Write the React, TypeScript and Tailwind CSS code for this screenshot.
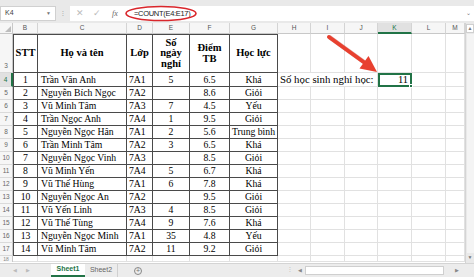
import React from "react"

const rows = [
  ["1", "Trần Văn Anh", "7A1", "5", "6.5", "Khá"],
  ["2", "Nguyễn Bích Ngọc", "7A2", "", "8.6", "Giỏi"],
  ["3", "Vũ Minh Tâm", "7A3", "7", "4.5", "Yếu"],
  ["4", "Trần Ngọc Anh", "7A4", "1", "9.5", "Giỏi"],
  ["5", "Nguyễn Ngọc Hân", "7A1", "2", "5.6", "Trung bình"],
  ["6", "Trần Minh Tâm", "7A2", "3", "6.5", "Khá"],
  ["7", "Nguyễn Ngọc Vinh", "7A3", "", "8.5", "Giỏi"],
  ["8", "Vũ Minh Yến", "7A4", "5", "6.7", "Khá"],
  ["9", "Vũ Thế Hùng", "7A1", "6", "7.8", "Khá"],
  ["10", "Nguyễn Ngọc An", "7A2", "", "9.5", "Giỏi"],
  ["11", "Vũ  Yến Linh", "7A3", "4", "8.5", "Giỏi"],
  ["12", "Vũ Thế Tùng", "7A4", "9", "7.6", "Khá"],
  ["13", "Nguyễn Ngọc Minh", "7A1", "35", "4.8", "Yếu"],
  ["14", "Vũ Minh Tâm", "7A2", "11", "9.2", "Giỏi"],
]

const cols = "grid-cols-[13px_25px_89px_26px_37px_40px_48px_33px_34px_33px_34px_34px_19px]"
const serif = "font-['Liberation_Serif','Times_New_Roman',serif]"
const sans = "font-['Liberation_Sans',Arial,sans-serif]"

function RowHead({ n, active }: { n: string; active?: boolean }) {
  return (
    <div
      className={`flex items-end justify-center pb-[1px] text-[6.5px] ${sans} border-b border-[#dadada] ${
        active ? "bg-[#e1e1e1] text-[#217346] border-r-2 border-r-[#217346]" : "bg-[#f6f6f6] text-[#666] border-r border-r-[#c8c8c8]"
      }`}
    >
      {n}
    </div>
  )
}

function Grid({ count }: { count: number }) {
  return (
    <>
      {Array.from({ length: count }).map((_, i) => (
        <div key={i} className="border-r border-b border-[#e1e1e1]" />
      ))}
    </>
  )
}

export default function App() {
  const t = `${serif} text-[9.7px] text-black leading-none flex items-center border-r border-b border-[#4a4a4a] overflow-hidden whitespace-nowrap`
  return (
    <div className="relative w-[474px] h-[277px] overflow-hidden bg-white">
      {/* formula bar */}
      <div className="h-[23px] bg-[#e9e9e9] pt-[6px] flex">
        <div className={`w-[56px] h-[15px] bg-white border border-[#d0d0d0] flex items-center justify-between px-[4px] text-[7px] text-[#444] ${sans}`}>
          <span>K4</span>
          <span className="text-[5px] text-[#777]">▼</span>
        </div>
        <div className="w-[14px] flex items-center justify-center text-[7px] text-[#aaa]">⁝</div>
        <div className={`flex-1 h-[15px] bg-white flex items-center ${sans}`}>
          <span className="w-[16px] text-center text-[9px] text-[#bbb] ml-[2px]">✕</span>
          <span className="w-[18px] text-center text-[9px] text-[#bbb]">✓</span>
          <span className={`w-[18px] text-center text-[8px] italic text-[#666] ${serif}`}>fx</span>
          <span className="ml-[10px] text-[7.5px] text-[#222] tracking-[-0.3px]">=COUNT(E4:E17)</span>
          <span className="ml-auto mr-[3px] text-[6px] text-[#777]">⌄</span>
        </div>
      </div>

      <div className="flex h-[240px]">
        <div className={`grid ${cols} grid-rows-[11px_39px_14px_repeat(13,13px)_6px] flex-1`}>
          {/* column headers */}
          <div className="bg-[#f6f6f6] border-r border-b border-[#c8c8c8] flex items-end justify-end p-[1px]">
            <div className="w-0 h-0 border-l-[6px] border-l-transparent border-b-[6px] border-b-[#bdbdbd]" />
          </div>
          {["B", "C", "D", "E", "F", "G", "H", "I", "J", "K", "L", "M"].map((c) => (
            <div
              key={c}
              className={`flex items-center justify-center text-[6.5px] ${sans} border-r border-[#d4d4d4] ${
                c === "K" ? "bg-[#e1e1e1] text-[#217346] border-b-2 border-b-[#217346]" : "bg-[#f6f6f6] text-[#555] border-b border-b-[#c8c8c8]"
              }`}
            >
              {c}
            </div>
          ))}

          {/* row 3 headers */}
          <RowHead n="3" />
          {["STT", "Họ và tên", "Lớp", "Số\nngày\nnghỉ", "Điểm\nTB", "Học lực"].map((h, i) => (
            <div
              key={h}
              className={`${t} border-t font-bold justify-center text-center whitespace-pre-line !text-[10.5px] leading-[13px] ${i === 0 ? "border-l" : ""}`}
            >
              {h}
            </div>
          ))}
          <Grid count={6} />

          {rows.map((r, i) => (
            <React.Fragment key={r[0]}>
              <RowHead n={String(i + 4)} active={i === 0} />
              <div className={`${t} border-l justify-center`}>{r[0]}</div>
              <div className={`${t} pl-[3px]`}>{r[1]}</div>
              <div className={`${t} pl-[2px]`}>{r[2]}</div>
              <div className={`${t} justify-center`}>{r[3]}</div>
              <div className={`${t} justify-center`}>{r[4]}</div>
              <div className={`${t} justify-center`}>{r[5]}</div>
              {i === 0 ? (
                <>
                  <div className={`col-span-3 border-b border-r border-[#e1e1e1] flex items-center pl-[2px] ${serif} text-[10.8px] leading-none whitespace-nowrap`}>
                    Số học sinh nghỉ học:
                  </div>
                  <div className={`relative border-2 border-[#217346] flex items-center justify-end pr-[2px] ${serif} text-[10.5px] leading-none`}>
                    11
                    <div className="absolute -right-[3px] -bottom-[3px] w-[4px] h-[4px] bg-[#217346] border border-white" />
                  </div>
                  <Grid count={2} />
                </>
              ) : (
                <Grid count={6} />
              )}
            </React.Fragment>
          ))}

          {/* row 18 partial */}
          <div className={`bg-[#f6f6f6] border-r border-[#c8c8c8] text-[5px] text-[#888] ${sans} flex justify-center items-end leading-none`}>18</div>
          <Grid count={12} />
        </div>

        {/* vertical scrollbar */}
        <div className="w-[9px] bg-[#e9e9e9] border-l border-[#d4d4d4] flex flex-col items-center justify-between py-[1px] text-[5px] text-[#777]">
          <div className="w-[8px] h-[9px] bg-white border border-[#cfcfcf] flex items-center justify-center">▲</div>
          <div className="flex-1 w-[7px] my-[1px] bg-[#f4f4f4]" />
          <div className="h-[8px] flex items-center">▼</div>
        </div>
      </div>

      {/* sheet tabs */}
      <div className={`h-[14px] bg-[#ececec] border-t border-[#d4d4d4] flex items-stretch text-[7px] ${sans}`}>
        <div className="w-[51px] flex items-center gap-[9px] pl-[13px] text-[5px] text-[#bbb]">
          <span>◀</span>
          <span>▶</span>
        </div>
        <div className="w-[34px] bg-white border-b-2 border-[#217346] flex items-center justify-center font-bold text-[#217346]">
          Sheet1
        </div>
        <div className="w-[33px] border-r border-[#d0d0d0] flex items-center justify-center text-[#666]">Sheet2</div>
        <div className="w-[40px] flex items-center justify-center">
          <span className="w-[8px] h-[8px] rounded-full border border-[#888] flex items-center justify-center text-[7px] leading-none text-[#777]">+</span>
        </div>
        <div className="flex-1" />
        <div className="w-[10px] flex items-center justify-center text-[#bbb]">⁝</div>
        <div className="w-[10px] flex items-center justify-center text-[5px] text-[#888]">◀</div>
        <div className="w-[139px] my-[2px] bg-white border border-[#cfcfcf]" />
        <div className="w-[21px] flex items-center justify-end pr-[6px] text-[5px] text-[#888]">▶</div>
        <div className="w-[9px]" />
      </div>

      {/* annotations */}
      <svg className="absolute left-0 top-0 pointer-events-none" width="474" height="277" viewBox="0 0 474 277">
        <ellipse cx="161" cy="13.5" rx="35" ry="7" fill="none" stroke="#d9262b" strokeWidth="1.6" />
        <line x1="330" y1="37.5" x2="366" y2="63.5" stroke="#b52a20" strokeWidth="4.5" strokeLinecap="round" opacity="0.35" />
        <line x1="329" y1="37" x2="365" y2="63" stroke="#e8402f" strokeWidth="4" strokeLinecap="round" />
        <polygon points="377,72 359.5,68.5 368.5,56" fill="#e8402f" />
      </svg>
    </div>
  )
}
